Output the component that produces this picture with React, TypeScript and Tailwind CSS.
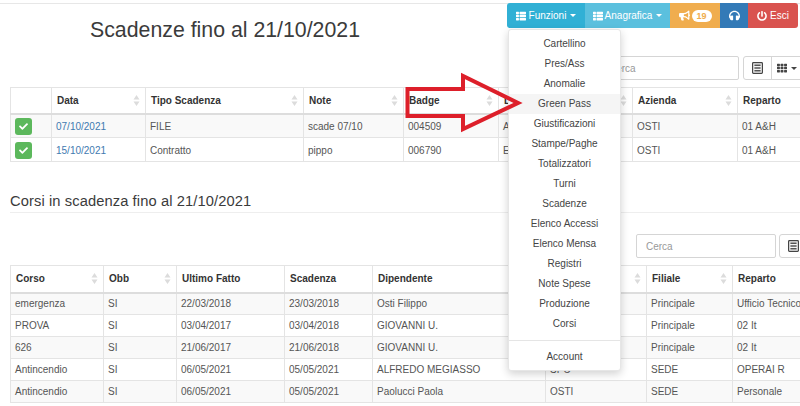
import { FaThList, FaBullhorn, FaHeadphones, FaPowerOff, FaCheck, FaTh } from "react-icons/fa";

function Sort() {
  return (
    <svg width="7" height="11" viewBox="0 0 7 11" className="shrink-0">
      <path d="M3.5 0 L6.5 4.5 H0.5 Z M3.5 11 L0.5 6.5 H6.5 Z" fill="#dcdcdc" />
    </svg>
  );
}

function Caret() {
  return <span className="inline-block w-0 h-0 ml-[4px] border-x-[3px] border-x-transparent border-t-[3px] border-t-current align-middle" />;
}

function ListAlt() {
  return (
    <svg width="11" height="12" viewBox="0 0 11 12">
      <rect x="0.6" y="0.6" width="9.8" height="10.8" rx="0.8" fill="#f4f4f4" stroke="#444" strokeWidth="1.2" />
      <path d="M2.4 3.2 H8.6 M2.4 6 H8.6 M2.4 8.8 H8.6" stroke="#555" strokeWidth="1.4" />
    </svg>
  );
}

type Col = { title: string; width: number; sort: boolean };

function DataTable({ cols, rows, rowClass, headClass, cellClass, link }: { cols: Col[]; rows: (string | null)[][]; rowClass: string; headClass: string; cellClass: string; link?: boolean }) {
  const total = cols.reduce((a, c) => a + c.width, 0);
  return (
    <table className="table-fixed border-collapse ml-[10px] text-[10px] text-[#555]" style={{ width: total }}>
      <colgroup>
        {cols.map((c, i) => (
          <col key={i} style={{ width: c.width }} />
        ))}
      </colgroup>
      <thead>
        <tr className={headClass}>
          {cols.map((c, i) => (
            <th key={i} className={`border border-[#e4e4e4] border-b-2 border-b-[#dddddd] p-0 font-bold text-[#333] text-left ${cellClass}`}>
              <div className="flex items-center justify-between pl-[5px] pr-[5px]">
                <span className="whitespace-nowrap">{c.title}</span>
                {c.sort && <Sort />}
              </div>
            </th>
          ))}
        </tr>
      </thead>
      <tbody>
        {rows.map((r, ri) => (
          <tr key={ri} className={`${rowClass} ${ri % 2 === 0 ? "bg-[#f9f9f9]" : "bg-white"}`}>
            {r.map((v, ci) => (
              <td key={ci} className={`border border-[#e4e4e4] p-0 pl-[4px] whitespace-nowrap overflow-hidden ${cellClass}`}>
                {v === null ? (
                  <span className="flex items-center justify-center w-[17px] h-[17px] rounded-[3px] bg-[#5cb85c] text-white">
                    <FaCheck size={9} />
                  </span>
                ) : link && ci === 1 ? (
                  <span className="text-[#3f7ab0]">{v}</span>
                ) : (
                  v
                )}
              </td>
            ))}
          </tr>
        ))}
      </tbody>
    </table>
  );
}

const cols1: Col[] = [
  { title: "", width: 41, sort: false },
  { title: "Data", width: 94, sort: true },
  { title: "Tipo Scadenza", width: 158, sort: true },
  { title: "Note", width: 100, sort: true },
  { title: "Badge", width: 95, sort: true },
  { title: "L", width: 134, sort: true },
  { title: "Azienda", width: 105, sort: true },
  { title: "Reparto", width: 70, sort: false },
];

const rows1: (string | null)[][] = [
  [null, "07/10/2021", "FILE", "scade 07/10", "004509", "A", "OSTI", "01 A&H"],
  [null, "15/10/2021", "Contratto", "pippo", "006790", "E", "OSTI", "01 A&H"],
];

const cols2: Col[] = [
  { title: "Corso", width: 93, sort: true },
  { title: "Obb", width: 73, sort: true },
  { title: "Ultimo Fatto", width: 108, sort: false },
  { title: "Scadenza", width: 88, sort: false },
  { title: "Dipendente", width: 173, sort: false },
  { title: "", width: 101, sort: true },
  { title: "Filiale", width: 86, sort: true },
  { title: "Reparto", width: 80, sort: false },
];

const rows2: string[][] = [
  ["emergenza", "SI", "22/03/2018", "23/03/2018", "Osti Filippo", "", "Principale", "Ufficio Tecnico"],
  ["PROVA", "SI", "03/04/2017", "03/04/2018", "GIOVANNI U.", "", "Principale", "02 It"],
  ["626", "SI", "21/06/2017", "21/06/2018", "GIOVANNI U.", "", "Principale", "02 It"],
  ["Antincendio", "SI", "06/05/2021", "05/05/2021", "ALFREDO MEGIASSO", "SPO", "SEDE", "OPERAI R"],
  ["Antincendio", "SI", "06/05/2021", "05/05/2021", "Paolucci Paola", "OSTI", "SEDE", "Personale"],
];

const menu = [
  "Cartellino",
  "Pres/Ass",
  "Anomalie",
  "Green Pass",
  "Giustificazioni",
  "Stampe/Paghe",
  "Totalizzatori",
  "Turni",
  "Scadenze",
  "Elenco Accessi",
  "Elenco Mensa",
  "Registri",
  "Note Spese",
  "Produzione",
  "Corsi",
];

export default function App() {
  return (
    <div className="relative w-[800px] h-[406px] overflow-hidden bg-white font-['Liberation_Sans',Arial,sans-serif] text-[#333]">
      <div className="mt-[3px] border-t border-[#e7e7e7]">
        <div className="flex justify-between h-[52px]">
          <h1 className="pl-[90px] pt-[12px] text-[21.3px] leading-[28px] font-normal text-[#3b3b3b] whitespace-nowrap">
            Scadenze fino al 21/10/2021
          </h1>
          <div className="flex h-[25px] -mt-px mr-[2px] text-[10px] text-white">
            <div className="flex items-center w-[78px] justify-center rounded-l-[3px] bg-[#31b0d5]">
              <FaThList size={10} className="mr-[3px]" />
              Funzioni
              <Caret />
            </div>
            <div className="flex items-center w-[85px] justify-center bg-[#5bc0de]">
              <FaThList size={10} className="mr-[2px]" />
              Anagrafica
              <Caret />
            </div>
            <div className="flex items-center w-[50px] justify-center gap-[2px] bg-[#f0ad4e]">
              <FaBullhorn size={11} />
              <span className="w-[20px] h-[12px] rounded-full bg-white text-[#f0ad4e] font-bold text-[9px] leading-[12px] text-center">19</span>
            </div>
            <div className="flex items-center w-[28px] justify-center bg-[#337ab7]">
              <FaHeadphones size={11} />
            </div>
            <div className="flex items-center w-[50px] justify-center gap-[3px] rounded-r-[3px] bg-[#d9534f]">
              <FaPowerOff size={10} />
              Esci
            </div>
          </div>
        </div>

        <div className="flex gap-[4px] ml-[599px] w-max h-[24px] text-[10px]">
          <div className="w-[140px] border border-[#d5d5d5] rounded-[2px] pl-[9px] flex items-center text-[#999]">Cerca</div>
          <div className="flex border border-[#d5d5d5] rounded-[3px] text-[#444]">
            <div className="w-[28px] flex items-center justify-center border-r border-[#d5d5d5]">
              <ListAlt />
            </div>
            <div className="w-[30px] flex items-center justify-center">
              <FaTh size={10} />
              <Caret />
            </div>
          </div>
        </div>

        <div className="mt-[7px]">
          <DataTable cols={cols1} rows={rows1} rowClass="h-[24px]" headClass="h-[26px]" cellClass="pt-[1px]" link />
        </div>

        <h3 className="mt-[29px] ml-[10px] h-[22px] border-b border-[#eeeeee] text-[14.7px] leading-[20px] font-normal text-[#3b3b3b] whitespace-nowrap tracking-[0.1px]">
          Corsi in scadenza fino al 21/10/2021
        </h3>

        <div className="flex gap-[3px] ml-[636px] mt-[21px] w-max h-[24px] text-[10px]">
          <div className="w-[140px] border border-[#d5d5d5] rounded-[2px] pl-[9px] flex items-center text-[#999]">Cerca</div>
          <div className="flex border border-[#d5d5d5] rounded-[3px] text-[#444]">
            <div className="w-[28px] flex items-center justify-center border-r border-[#d5d5d5]">
              <ListAlt />
            </div>
          </div>
        </div>

        <div className="mt-[7px]">
          <DataTable cols={cols2} rows={rows2} rowClass="h-[22px]" headClass="h-[27px]" cellClass="" />
        </div>
      </div>

      <div className="absolute left-[508px] top-[29px] w-[113px] h-[342px] bg-white border border-[#e6e6e6] rounded-[3px] shadow-[0_3px_8px_rgba(0,0,0,0.18)] pt-[4px] text-[10px] text-[#444] text-center">
        {menu.map((m) => (
          <div key={m} className={`h-[20px] leading-[20px] ${m === "Green Pass" ? "bg-[#f5f5f5]" : ""}`}>
            {m}
          </div>
        ))}
        <div className="mt-[6px] mb-[6px] h-px bg-[#e5e5e5]" />
        <div className="h-[20px] leading-[20px]">Account</div>
      </div>

      <svg className="absolute left-[400px] top-[68px]" width="125" height="70" viewBox="0 0 125 70">
        <path d="M7.5 21 H63 V8 L118 35 L63 61 V48 H7.5 Z" fill="none" stroke="#dd1f2a" strokeWidth="4" strokeLinejoin="miter" />
      </svg>
    </div>
  );
}
